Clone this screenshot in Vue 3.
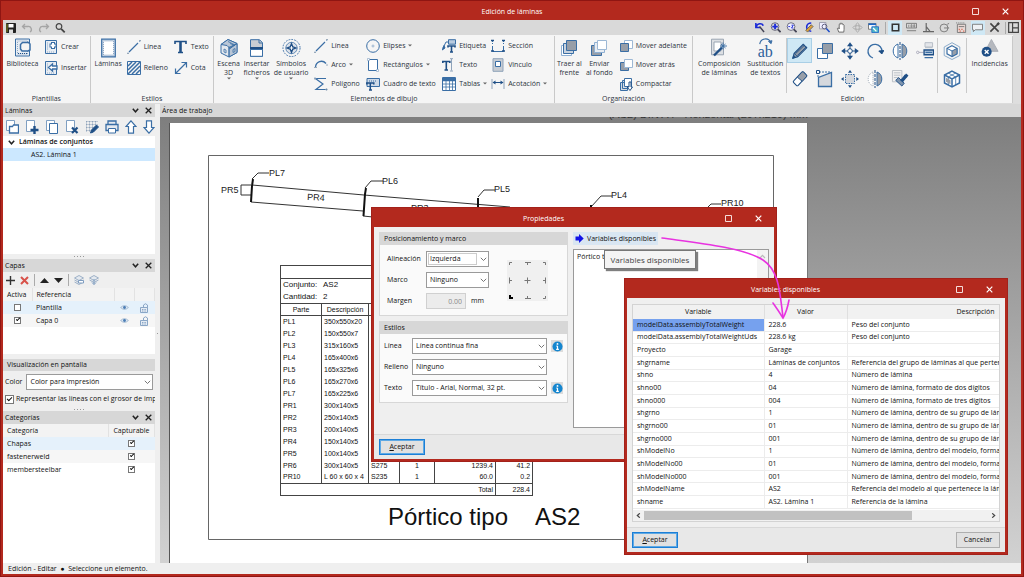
<script setup>
import { h, ref } from 'vue'

const B = '#3a6ea5'
const D = '#1f4f86'
const K = '#979ea8'

// each entry: [viewBox width, viewBox height, markup]
const icons = {
  save: [10, 10, `<path d="M.5.5h9v9h-9z" fill="#222" stroke="#222"/><path d="M2.500 1h5v3.500h-5z" fill="#fff" stroke="none"/><path d="M3 6.500h4V10H3z" fill="#ddd" stroke="none"/><path d="M1 1v8" stroke="#8b8b20"/>`],
  undo: [12, 10, `<path d="M4 1 1.500 3.500 4 6M2 3.500h5a3 3 0 0 1 2 5.500" stroke="#a5a5a5" stroke-width="1.300"/>`],
  redo: [12, 10, `<path d="M8 1l2.500 2.500L8 6M10 3.500H5a3 3 0 0 0-2 5.500" stroke="#a5a5a5" stroke-width="1.300"/>`],
  lens: [11, 10, `<circle cx="4" cy="3.500" r="2.800" stroke="#444" stroke-width="1.200"/><path d="M6.200 5.800l3.500 3.500" stroke="#444" stroke-width="1.800"/>`],
  library: [17, 19, `<path d="M1.500.5h14v17h-14z" fill="#e8edf3"/><path d="M3.500 2.500h10v13h-10z" stroke-dasharray="1 1" stroke="#8fa9c6"/><path d="M8.500 4h6l1.500 1.500v6l-2 1H8l-1.500-2V6z" fill="#f5f5f5" stroke-width="1.500"/><path d="M4 15h9" stroke="${D}" stroke-dasharray="1 1"/>`],
  create: [13, 14, `<path d="M.5.5h11v13H.5z" fill="#e8edf3"/><path d="M2.500 2.500v8M2 12h8" stroke-dasharray="1 1" stroke="#8fa9c6"/><path d="M8 2v7M4.500 5.500h7" stroke="${B}" stroke-width="4"/><path d="M8 3v5M5.500 5.500h5" stroke="#fff" stroke-width="2"/>`],
  insert: [13, 14, `<path d="M.5.5h11v13H.5z" fill="#e8edf3"/><path d="M2.500 2.500v8M2 12h8" stroke-dasharray="1 1" stroke="#8fa9c6"/><path d="M3.500 6.500l4-3.500v2H12v3H7.500v2z" fill="#fff" stroke-width="1.300"/>`],
  sheet: [15, 19, `<path d="M.7.7h13.600v17.600H.7z" fill="#c9d6e5" stroke-width="1.200"/><path d="M2.500 2.500h10v14h-10z" fill="#fff" stroke="#8fa9c6" stroke-dasharray="1 1"/>`],
  line: [14, 14, `<path d="M2 12 11 3M12.500 1.500l.5-.5M1 13l.3-.3" stroke-width="1.200"/><path d="M0 13.500h2M12 .5h2" stroke="#9ab"/>`],
  hatch: [14, 14, `<path d="M.5.500h13v13H.5z"/><path d="M1 5l4-4M1 9l8-8M1 13 13 1M5 13l8-8M9 13l4-4" stroke-width="1.500"/>`],
  bigT: [14, 14, `<path d="M1 4V1.500h11V4M6.500 2v10M4 12.500h5" stroke="${D}" stroke-width="1.600"/><path d="M6.500 2v10" stroke="${D}" stroke-width="2.400"/>`],
  dim: [14, 14, `<path d="M2 12 12 2M7.500 1.500h5v5M1.500 7.500v5h5" stroke-width="1.200"/>`],
  house: [18, 19, `<path d="M1 6l7-5 9 4v9l-8 4.500-8-4z" fill="#e3e8ee"/><path d="M1 6l7-5 9 4-7 5-3-3zM9 9l8-4v9l-8 4.500z" fill="#b9c6d6"/><path d="M9 10l8-5M10 5l5 2M8 3l6 3M4 10.500v3l2 1v-3zM9 8v10M13 11v3l2-1v-3z" stroke-width=".8"/>`],
  file: [15, 18, `<path d="M1.500.7h9l3 3v13.600h-12z" fill="#c9cdd3"/><path d="M1 9h13" stroke="${D}" stroke-width="2"/><path d="M1.500 10.500h12v6.800h-12z" fill="#fff"/><path d="M10 1v3h3"/>`],
  compass: [20, 20, `<circle cx="10" cy="10" r="9" stroke-dasharray="1.800 1.200"/><circle cx="10" cy="10" r="6" fill="#dbe1e9" stroke-width=".8"/><path d="M10 3.500 11.800 8.200 16.500 10 11.800 11.800 10 16.500 8.200 11.800 3.500 10 8.200 8.200z" fill="${D}" stroke="none"/><path d="M10 8v4M8 10h4" stroke="#fff"/>`],
  arc: [14, 14, `<path d="M1.500 9C2 4 8 1 12 5.500" stroke-width="1.300"/><path d="M0 9.500h3M12 7h2" stroke="#9ab"/>`],
  poly: [14, 14, `<path d="M12 1.500H1.500L9 7l-7 5.500h11" stroke-width="1.200"/><circle cx="1" cy="1.500" r=".8" stroke="#9ab"/><circle cx="12.500" cy="12.500" r=".8" stroke="#9ab"/>`],
  ellipse: [14, 14, `<circle cx="7" cy="7" r="6.300"/><circle cx="7" cy="7" r="1" stroke="#9bb4d0"/>`],
  rect: [14, 14, `<path d="M2.500 1.500h9v11h-9z" fill="#fff"/><path d="M1.500.5h2v2h-2zM10.500 11.500h2v2h-2z" fill="#fff" stroke="#8fa9c6" stroke-width=".7"/>`],
  textbox: [14, 14, `<path d="M1 1.500h12.500v8H1z" fill="#cfdae7"/><path d="M3 4h8" stroke-dasharray="1 1"/><path d="M.8 7.500V6h7v1.500M4.300 6v6.500M3 13h3" stroke="${D}" stroke-width="1.500"/>`],
  tag: [14, 14, `<path d="M6.500.7h7v4.500h-7z" fill="#b9cbdf"/><path d="M1 9 4 3h2.500" /><path d="M.2 11 2 6.500 3 9z" fill="${D}"/><path d="M6 8.500V7h7v1.500M9.500 7v5.500M8 13h3" stroke="${D}" stroke-width="1.600"/>`],
  textI: [14, 14, `<path d="M.8 5V3.500h7V5M4.300 4v7.500M2.500 12h3.500" stroke="${D}" stroke-width="1.600"/><path d="M9.500 1v11.500M8 .7h3M8 13h3" stroke="#8fa3ba"/>`],
  table: [14, 14, `<path d="M.5.500h13v13H.5z" fill="#fff"/><path d="M1 2.500h12" stroke-width="3.500" /><path d="M4 1v12M7.500 1v12M10.500 1v12M1 7h12M1 10h12" stroke-width=".8"/>`],
  section: [14, 14, `<path d="M1.500 1v4M12.500 1v4" stroke-dasharray="2 1"/><path d="M1.500 7v5.500h11V7" /><path d="M0 1.500h3M11 1.500h3M0 12h3M11 12h3" stroke="${D}" stroke-width="1.600"/>`],
  link: [14, 14, `<path d="M2 .7h10v12.600H2z" fill="#c7ccd3" stroke="#8fa3ba"/><path d="M4.500 3.500h5v5h-5z" fill="#fff" stroke="${B}"/>`],
  measure: [14, 14, `<path d="M1 2v10M13 2v10" stroke="#8fa3ba"/><path d="M2 5.500h10" stroke="${D}"/><path d="M1.500 5.500l3-2v4zM12.500 5.500l-3-2v4z" fill="${D}" stroke="none"/>`],
  front: [18, 18, `<path d="M1.500 6.500h10v10h-10z" fill="#fff" stroke="#8fb0d3"/><path d="M3.500 4.500h10v10h-10z" fill="#c9d3de"/><path d="M6.500 1.500h10v10h-10z" fill="${K}"/>`],
  back: [18, 18, `<path d="M1.500 6.500h10v10h-10z" fill="${K}"/><path d="M4.500 3.500h10v10h-10z" fill="#e8edf3" stroke="#8fb0d3"/><path d="M7.500 1.500h9v9h-9z" fill="#fff" stroke="#9db8d5"/>`],
  fwd: [14, 14, `<path d="M5.500 1.500h8v8h-8z" fill="#fff" stroke="#9db8d5"/><path d="M1.500 4.500h8v8h-8z" fill="${K}"/>`],
  bwd: [14, 14, `<path d="M1.500 4.500h8v8h-8z" fill="${K}"/><path d="M5.500 1.500h8v8h-8z" fill="#fff" stroke="#9db8d5"/>`],
  compact: [14, 14, `<path d="M1.500 5.500h7v8h-7zM3.500 3.500h7v8h-7z" fill="#d3dae3"/><path d="M5.500 1.500h7v8h-7z" fill="#fff"/><path d="M10 5v5H8l3 3.500 2.500-3.500H12V5z" fill="#fff" stroke="${D}"/>`],
  wand: [18, 19, `<path d="M1.500.7h12v15.600h-12z" fill="#dcdfe3" stroke="#9aa5b2"/><path d="M4 3.500h7v9H4z" fill="#fff" stroke="#9aa5b2"/><path d="M4 17 12 9" stroke="${D}" stroke-width="2.400"/><path d="M13 4v7M10 7.500h7M11 5.500l4.500 4M15.500 5.500l-4.500 4" stroke-width=".9"/>`],
  pencil: [20, 20, `<path d="M2 18l1.500-5.500L13.500 2.500l4 4-10 10z" fill="${K}" stroke="${D}" stroke-width="1.200"/><path d="M5 13 15 3.500M7 15 17 5.500M3.500 12.500l4 4" stroke="${D}"/><path d="M2 18l1-3 2 2z" fill="${D}" stroke="${D}"/>`],
  copy2: [18, 18, `<path d="M1.500 6.500h10v10h-10z" fill="#fff"/><path d="M6.500 1.500h10v10h-10z" fill="${K}"/>`],
  move: [18, 18, `<path d="M9 2v14M2 9h14" stroke="${D}"/><path d="M9 .2l3 4H6zM9 17.800l3-4H6zM.2 9l4-3v6zM17.800 9l-4-3v6z" fill="${D}" stroke="none"/><circle cx="9" cy="9" r="2.300" fill="#fff" stroke="${D}"/>`],
  rotate: [18, 18, `<path d="M7 16A7 7 0 1 1 16 9.500" stroke="${B}" stroke-width="1.300"/><path d="M12.800 9l3 3 2-3.500z" fill="${D}" stroke="${D}"/>`],
  mirror: [18, 18, `<path d="M7 2A7.500 7.500 0 0 0 7 16z" fill="#fff"/><path d="M11 2a7.500 7.500 0 0 1 0 14z" fill="${K}"/><path d="M9 0v18" stroke="${D}" stroke-dasharray="3 1"/>`],
  mirror2: [18, 18, `<path d="M7 2A7.500 7.500 0 0 0 7 16z" fill="#fff" stroke="#9aa5b2" stroke-dasharray="1 1"/><path d="M11 2a7.500 7.500 0 0 1 0 14z" fill="${K}"/><path d="M9 0v18" stroke="${D}" stroke-dasharray="3 1"/>`],
  tags2: [19, 18, `<path d="M9.500.7h8v4.600h-8zM9.500 6h8" stroke="#b5bcc5" fill="#e4e6ea"/><circle cx="1.800" cy="11" r="1.300" stroke="#aab"/><path d="M3 11h5" stroke="#aab"/><path d="M8.500 8.500h10v5h-10z" fill="#b9cbdf" stroke="${D}" stroke-width="1.400"/><path d="M9 16.500h9M10 11h7" stroke-width="1.200"/>`],
  eraser: [20, 20, `<path d="M3 12 12 2.500q1-1 2 0l3 3q1 1 0 2L8 17q-1 1-2 0l-3-3q-1-1 0-2z" fill="#fff" stroke="${D}" stroke-width="1.200"/><path d="M7 8l5-5.500q1-1 2 0l3 3q1 1 0 2L12.500 12.500z" fill="${K}" stroke="${D}"/>`],
  scale: [18, 18, `<path d="M2.500 16.500v-9l13-5v14z" fill="#d5d8dd" stroke-width="1.300"/><path d="M2 7V2h13" stroke-dasharray="2 1"/><path d="M.5.5h3v3h-3z" fill="#fff" stroke="${D}"/>`],
  bounds: [18, 18, `<path d="M4.500 4.500h9v9h-9z" fill="#d5d8dd" stroke-dasharray="1.500 1"/><path d="M9 0l2 2.700H7zM9 18l2-2.700H7zM0 9l2.700-2v4zM18 9l-2.700-2v4z" fill="${D}" stroke="none"/>`],
  stamp: [19, 18, `<path d="M1.500.5h10v12h-10z" fill="#f2f2f2" stroke="#b9bec5"/><path d="M3 3h7M3 5.500h7M3 8h5" stroke="#b9bec5"/><path d="M5 11l6.500 6 2.500-3-6-6z" fill="#7d93ad" stroke="${D}"/><path d="M11 12l5-6" stroke="${D}" stroke-width="3.500"/><path d="M15 5l2.500 2" stroke="${D}" stroke-width="3"/>`],
  cube1: [18, 18, `<path d="M9 .7 16.800 5v8.500L9 17.500 1.200 13.500V5z" stroke="#8cabca"/><path d="M9 3.700 14 6.300v5.500L9 14.500 4 11.800V6.300z" fill="#fff" stroke-width="1.200"/><path d="M9 9v5.500l5-2.700V6.300z" fill="${K}"/><path d="M4 6.300 9 9"/>`],
  cube2: [18, 18, `<path d="M9 1.200 16.500 5v8L9 17 1.500 13V5z" fill="#fff" stroke-width="1.500"/><path d="M1.500 5 9 9l7.500-4M9 9v8" stroke-width="1.500"/><path d="M5.300 3 12.700 7v8M12.700 3 5.300 7v8" stroke-width=".8"/><path d="M3 7.800l4.500 2.400v4L3 11.800z" fill="${K}" stroke="none"/>`],
  warn: [20, 20, `<path d="M12 1 19 13.500H5.500z" fill="#b5b8be" stroke="#a9adb4"/><circle cx="7" cy="14" r="5.300" fill="${D}" stroke="none"/><path d="M5 12l4 4M9 12l-4 4" stroke="#fff" stroke-width="1.500"/>`],
  repl: [20, 8, `<path d="M4 7C5 0 14-1 16.500 5" stroke-width="1.300"/><path d="M14 4l3 2.500L18 3z" fill="${B}"/>`],

  zprev: [12, 12, `<path d="M2 1v5h5M2.500 5.500C3 1 9 1 10 4" stroke="#1b2bd8" stroke-width="1.700"/><path d="M6 5l5 6" stroke="#445" stroke-width="1.600"/>`],
  zfit: [12, 12, `<circle cx="5.500" cy="5" r="4.200" stroke="#667"/><path d="M5.500 2v6M2.500 5h6" stroke="#1b2bd8" stroke-width="2"/><path d="M8.500 8l3 3" stroke="#445" stroke-width="1.800"/>`],
  zdouble: [12, 12, `<circle cx="5.500" cy="5" r="4.200" stroke="#667" fill="#eef"/><path d="M2.500 5h2M6 3.500h2L6 6.500h2" stroke="#1b2bd8"/><path d="M8.500 8l3 3" stroke="#445" stroke-width="1.800"/>`],
  zdraw: [12, 12, `<path d="M9 1a5 4.500 0 1 0 0 9" stroke="#1b2bd8" stroke-width="1.700"/><path d="M3 9l6-6 2 2-6 6z" fill="#e0a03c" stroke="#665"/>`],
  zwin: [12, 12, `<path d="M.5.5h7v7h-7z" stroke="#99a" fill="#eef"/><circle cx="6" cy="5" r="2.600" stroke="#557"/><path d="M8 7l3.500 4" stroke="#1b4bc8" stroke-width="1.600"/>`],
  hand: [12, 12, `<path d="M3 11 1.500 7l1.500-.5.500 1V2.500q1-1 1.300 0V1.500q1-1 1.300 0v.7q1-1 1.400 0v1q1-.8 1.300.3V8L8.500 11z" fill="#fff" stroke="#666"/>`],
  orbit: [12, 12, `<ellipse cx="6" cy="6" rx="5" ry="2" stroke="#aaa"/><ellipse cx="6" cy="6" rx="2" ry="5" stroke="#aaa"/>`],
  wins: [13, 12, `<path d="M.5.5h9v7h-9z" fill="#fff" stroke="#666"/><path d="M.5 1.500h9" stroke="#1b66c8" stroke-width="2"/><path d="M4.500 4.500h8v7h-8z" fill="#4fb6c8" stroke="#1b66c8"/><path d="M6 6l4 4" stroke="#fff" stroke-width="1.500"/>`],
  square: [12, 12, `<path d="M2.500 2.500h7v7h-7z" stroke="#333" stroke-width="1.700"/>`],
  ruler: [12, 12, `<path d="M.5 1.500h11v5H.5zM1 9.500h10" stroke="#777"/><path d="M3 3v2.500M5.500 3h1v2.500h-1zM8.500 3h1v2.500h-1z" stroke="#777" stroke-width=".8"/>`],
  angle: [12, 12, `<path d="M3.500 1v9.500H12M0 10.500h4M3.500 5l4 5" stroke="#666" stroke-width="1.300"/>`],
  circ: [12, 12, `<circle cx="5.500" cy="6.500" r="4.300" stroke="#777"/><path d="M5.500 6.500H11M9 2.500l2-1" stroke="#777"/>`],
  calc: [12, 12, `<path d="M1.500 2.500h9v9h-9z" fill="#e9d8d4" stroke="#777"/><path d="M3 5h6" stroke="#777"/><path d="M3 8h1M6 8h1M8 10h1M4 10h1" stroke="#d0472c" stroke-width="1.300"/><path d="M0 1h10" stroke="#777" stroke-dasharray="1 1"/>`],
  bubble: [12, 12, `<path d="M.5 2.500h11v6h-8l-2 2v-2h-1z" fill="#eef1f4" stroke="#777"/>`],
  tools: [12, 12, `<path d="M1.500 1.500l9 9M10.500 1.500l-9 9" stroke="#444" stroke-width="1.700"/><path d="M9 3l2-2" stroke="#444" stroke-width="2.600"/>`],
  layout: [12, 12, `<path d="M.7.700h10.600v10.600H.7zM5 1v10M5 6.500h6" stroke="#444" stroke-width="1.300"/>`],

  l1: [14, 14, `<path d="M1.500.5h8v10h-8z" fill="#fff" stroke="#7f9fc2"/><path d="M4.500 6.500h3l1-1.500h5v8h-9z" fill="#fff" stroke-width="1.300"/>`],
  l2: [14, 14, `<path d="M1.500.5h8v11h-8z" fill="#fff" stroke="#7f9fc2"/><path d="M9.500 6v8M5.500 10h8" stroke="${D}" stroke-width="2.400"/>`],
  l3: [14, 14, `<path d="M1.500.5h8v10h-8z" fill="#fff" stroke="#7f9fc2"/><path d="M4.500 3.500h8v10h-8z" fill="#fff"/>`],
  l4: [14, 14, `<path d="M1.500.5h8v11h-8z" fill="#fff" stroke="#7f9fc2"/><path d="M7 7.500l5.500 5.500M12.500 7.500 7 13" stroke="${D}" stroke-width="2.200"/>`],
  l5: [14, 14, `<path d="M1.500 1v11M4.500 1v11M7.500 1v8M10.500 1v4M1 1.500h12M1 4.500h12M1 7.500h8M1 10.500h5" stroke="#8fa3ba" stroke-dasharray="1 .5"/><path d="M5.500 13l1-3 5-5 2 2-5 5z" fill="${D}" stroke="${D}"/>`],
  l6: [14, 14, `<path d="M3 4.500V1h8v3.500M1 4.500h12v6H1z" fill="#e4e9ef" stroke-width="1.300"/><path d="M3.500 8.500h7V13h-7z" fill="#fff"/>`],
  up: [12, 14, `<path d="M6 .8 11 6.500H8.500v6.700h-5V6.500H1z" fill="#fff" stroke-width="1.200"/>`],
  down: [12, 14, `<path d="M6 13.200 11 7.500H8.500V.8h-5v6.700H1z" fill="#fff" stroke-width="1.200"/>`],
  chev: [7, 5, `<path d="M.8.8 3.500 3.800 6.200.8" stroke="#222" stroke-width="1.500"/>`],
  chevThin: [7, 5, `<path d="M.8.8 3.500 3.500 6.200.8" stroke="#666" stroke-width=".9"/>`],
  x: [7, 7, `<path d="M.7.7l5.600 5.600M6.300.7.7 6.300" stroke="#222" stroke-width="1.300"/>`],
  xw: [7, 7, `<path d="M.7.7l5.600 5.600M6.300.7.7 6.300" stroke="#fff" stroke-width="1.200"/>`],
  maxw: [7, 7, `<path d="M.5.5h6v6h-6z" stroke="#f5dcda"/>`],
  plus: [9, 9, `<path d="M4.500 0v9M0 4.500h9" stroke="#333" stroke-width="1.400"/>`],
  xr: [9, 9, `<path d="M1 1l7 7M8 1 1 8" stroke="#d8524a" stroke-width="2"/>`],
  triUp: [9, 5, `<path d="M0 5 4.500 0 9 5z" fill="#222" stroke="none"/>`],
  triDn: [9, 5, `<path d="M0 0l4.500 5L9 0z" fill="#222" stroke="none"/>`],
  layerA: [10, 10, `<path d="M.5 3 5 .5l4.500 2.500L5 5.500zM.5 5 5 7.500 9.500 5M.5 7 5 9.500 9.500 7" stroke="#9db0c6" fill="#e4e9ef"/><path d="M4.500 5.500h5v2.500h-5z" fill="#fff" stroke="#7f9dc0"/>`],
  layerB: [10, 10, `<path d="M.5 3 5 .5l4.500 2.500L5 5.500zM.5 5 5 7.500 9.500 5" stroke="#9db0c6" fill="#e4e9ef"/><path d="M5 4v5.500M3 7.500l2 2 2-2" stroke="#7f9dc0"/>`],
  eye: [10, 6, `<path d="M.3 3Q5-1.500 9.700 3 5 7.500.3 3z" fill="#dfe8f2" stroke="#8aa6c6" stroke-width=".8"/><circle cx="5" cy="3" r="1.700" fill="#4b7db5" stroke="none"/>`],
  lock: [9, 10, `<path d="M3.500 4.500V2q2-2.500 4 0v3" stroke="#8aa6c6"/><path d="M.5 4.500h7v5h-7z" fill="#e4ebf3" stroke="#8aa6c6"/><path d="M2 6.500h4M2 8h4" stroke="#8aa6c6" stroke-dasharray="1 .6"/>`],
  info: [12, 12, `<circle cx="6" cy="6" r="5.500" fill="#1586cf" stroke="none"/><path d="M6 5.500v3.500M4.800 5.500H6M4.500 9.200h3" stroke="#fff" stroke-width="1.300"/><circle cx="6" cy="3.200" r="1" fill="#fff" stroke="none"/>`],
  arrowR: [9, 9, `<path d="M.5 2.500H4V0l4.700 4.500L4 9V6.500H.5z" fill="#1212e6" stroke="none"/>`],
  caret: [4, 3, `<path d="M0 .5h4L2 2.500z" fill="#666" stroke="none"/>`],
  left: [5, 5, `<path d="M3.800.3 1.300 2.500l2.500 2.200" stroke="#444" stroke-width="1.200"/>`],
  right: [5, 5, `<path d="M1.200.3 3.700 2.500 1.200 4.700" stroke="#444" stroke-width="1.200"/>`],
  upThin: [7, 5, `<path d="M1 4l2.500-2.700L6 4" stroke="#bbb" stroke-width="1.200"/>`],
}

const Icon = (p) => {
  const [w, ht, body] = icons[p.n]
  return h('svg', { class: 'ic', viewBox: `0 0 ${w} ${ht}`, width: p.w || w, height: p.w ? Math.round((p.w * ht) / w) : ht, 'aria-hidden': 'true', innerHTML: body })
}
Icon.props = ['n', 'w']

const viewTools = ['zprev', 'zfit', 'zdouble', 'zdraw', 'zwin', 'hand', 'orbit', 'wins']
const snapTools = ['square', 'ruler', 'angle', 'circ', 'calc', 'bubble', 'tools']
const sheetTools = ['l1', 'l2', 'l3', 'l4', 'l5', 'l6', 'up', 'down']

const drawing = [
  [['line', 'Línea'], ['arc', 'Arco', 1], ['poly', 'Polígono']],
  [['ellipse', 'Elipses', 1], ['rect', 'Rectángulos', 1], ['textbox', 'Cuadro de texto']],
  [['tag', 'Etiqueta'], ['textI', 'Texto'], ['table', 'Tablas', 1]],
  [['section', 'Sección'], ['link', 'Vínculo'], ['measure', 'Acotación', 1]],
]
const order = [['fwd', 'Mover adelante'], ['bwd', 'Mover atrás'], ['compact', 'Compactar']]
const editTools = ['pencil', 'copy2', 'move', 'rotate', 'mirror', 'tags2', 'eraser', 'scale', 'bounds', 'mirror2', 'stamp']

const layers = ref([
  { name: 'Plantilla', on: false },
  { name: 'Capa 0', on: true },
])
const categories = ref([
  { name: 'Chapas', on: true },
  { name: 'fastenerweld', on: true },
  { name: 'membersteelbar', on: true },
])
const widths = ref(true)
const note = ref('Pórtico tipo   %modelData.elements')

const parts = [
  ['PL1', '350x550x20', 'S275', '1', '550.0', '30.2'],
  ['PL2', '150x550x7', 'S275', '1', '550.0', '4.5'],
  ['PL3', '315x160x5', 'S275', '1', '315.0', '2.0'],
  ['PL4', '165x400x6', 'S275', '1', '400.0', '3.1'],
  ['PL5', '165x325x6', 'S275', '1', '325.0', '2.5'],
  ['PL6', '165x270x6', 'S275', '1', '270.0', '2.1'],
  ['PL7', '165x225x6', 'S275', '1', '225.0', '1.7'],
  ['PR1', '300x140x5', 'S275', '1', '1239.4', '41.2'],
  ['PR2', '250x140x5', 'S275', '1', '1239.4', '38.0'],
  ['PR3', '200x140x5', 'S275', '1', '1239.4', '32.5'],
  ['PR4', '150x140x5', 'S275', '1', '1239.4', '29.2'],
  ['PR5', '100x140x5', 'S275', '1', '60.0', '0.2'],
  ['PR6', '300x140x5', 'S275', '1', '1239.4', '41.2'],
  ['PR10', 'L 60 x 60 x 4', 'S235', '1', '60.0', '0.2'],
]

const variables = [
  ['modelData.assemblyTotalWeight', '228.6', 'Peso del conjunto'],
  ['modelData.assemblyTotalWeightUds', '228.6 kg', 'Peso del conjunto'],
  ['Proyecto', 'Garage', ''],
  ['shgrname', 'Láminas de conjuntos', 'Referencia del grupo de láminas al que pertenece la lámina'],
  ['shno', '4', 'Número de lámina'],
  ['shno00', '04', 'Número de lámina, formato de dos dígitos'],
  ['shno000', '004', 'Número de lámina, formato de tres dígitos'],
  ['shgrno', '1', 'Número de lámina, dentro de su grupo de láminas'],
  ['shgrno00', '01', 'Número de lámina, dentro de su grupo de láminas, dos dígitos'],
  ['shgrno000', '001', 'Número de lámina, dentro de su grupo de láminas, tres dígitos'],
  ['shModelNo', '1', 'Número de lámina, dentro del modelo, formato simple'],
  ['shModelNo00', '01', 'Número de lámina, dentro del modelo, formato de dos dígitos'],
  ['shModelNo000', '001', 'Número de lámina, dentro del modelo, formato de tres dígitos'],
  ['shModelName', 'AS2', 'Referencia del modelo al que pertenece la lámina'],
  ['shname', 'AS2. Lámina 1', 'Referencia de la lámina'],
]
</script>

<template>
  <div class="window">
    <header class="title">
      <span>Edición de láminas</span>
      <div class="winbtns"><button aria-label="Maximizar"><Icon n="maxw" /></button><button aria-label="Cerrar"><Icon n="xw" /></button></div>
    </header>

    <div class="quick">
      <button aria-label="Guardar"><Icon n="save" /></button>
      <button aria-label="Deshacer"><Icon n="undo" /></button>
      <button aria-label="Rehacer"><Icon n="redo" /></button>
      <button aria-label="Buscar"><Icon n="lens" /></button>
      <div class="tools view"><button v-for="t in viewTools" :key="t" :aria-label="t"><Icon :n="t" w="11" /></button></div>
      <i class="vsep"></i>
      <div class="tools snap"><button v-for="t in snapTools" :key="t" :aria-label="t" :class="{ on: t === 'square' || t === 'bubble' }"><Icon :n="t" w="11" /></button></div>
      <i class="vsep"></i>
      <button aria-label="Disposición"><Icon n="layout" w="11" /></button>
    </div>

    <nav class="ribbon">
      <section class="group g1">
        <div class="tools-row">
          <button class="big w36"><Icon n="library" /><span>Biblioteca</span></button>
          <div class="stack two"><button class="small"><Icon n="create" />Crear</button><button class="small"><Icon n="insert" />Insertar</button></div>
        </div>
        <h2>Plantillas</h2>
      </section>
      <section class="group g2">
        <div class="tools-row">
          <button class="big w32"><Icon n="sheet" /><span>Láminas</span></button>
          <div class="stack two w44"><button class="small"><Icon n="line" />Línea</button><button class="small"><Icon n="hatch" />Relleno</button></div>
          <div class="stack two"><button class="small"><Icon n="bigT" />Texto</button><button class="small"><Icon n="dim" />Cota</button></div>
        </div>
        <h2>Estilos</h2>
      </section>
      <section class="group g3">
        <div class="tools-row">
          <button class="big w26"><Icon n="house" /><span>Escena<br>3D</span><Icon n="caret" /></button>
          <button class="big w28"><Icon n="file" /><span>Insertar<br>ficheros</span><Icon n="caret" /></button>
          <button class="big w40"><Icon n="compass" w="19" /><span>Símbolos<br>de usuario</span><Icon n="caret" /></button>
          <div v-for="(col, i) in drawing" :key="i" class="stack three" :class="'d' + i">
            <button v-for="b in col" :key="b[0]" class="small"><Icon :n="b[0]" />{{ b[1] }}<Icon v-if="b[2]" n="caret" /></button>
          </div>
        </div>
        <h2>Elementos de dibujo</h2>
      </section>
      <section class="group g4">
        <div class="tools-row">
          <button class="big w28"><Icon n="front" /><span>Traer al<br>frente</span></button>
          <button class="big w31"><Icon n="back" /><span>Enviar<br>al fondo</span></button>
          <div class="stack three"><button v-for="b in order" :key="b[0]" class="small"><Icon :n="b[0]" />{{ b[1] }}</button></div>
        </div>
        <h2>Organización</h2>
      </section>
      <section class="group g5">
        <div class="tools-row">
          <button class="big w48"><Icon n="wand" /><span>Composición<br>de láminas</span></button>
          <button class="big w42"><b class="ab"><Icon n="repl" w="18" />ab</b><span>Sustitución<br>de textos</span></button>
          <div class="edit"><button v-for="t in editTools" :key="t" :aria-label="t" :class="{ on: t === 'pencil' }"><Icon :n="t" w="18" /></button></div>
          <div class="cubes"><button aria-label="Cubo"><Icon n="cube1" /></button><button aria-label="Cubos"><Icon n="cube2" /></button></div>
          <button class="big inc"><Icon n="warn" w="19" /><span>Incidencias</span></button>
        </div>
        <h2>Edición</h2>
      </section>
    </nav>

    <div class="body">
      <aside>
        <div class="phead"><span>Láminas</span><button aria-label="Plegar"><Icon n="chev" /></button><button aria-label="Cerrar"><Icon n="x" /></button></div>
        <div class="sheetbar"><button v-for="t in sheetTools" :key="t" :aria-label="t"><Icon :n="t" /></button></div>
        <ul class="tree">
          <li class="root"><Icon n="chev" />Láminas de conjuntos</li>
          <li class="leaf">AS2. Lámina 1</li>
        </ul>
        <div class="grip"></div>
        <div class="phead"><span>Capas</span><button aria-label="Plegar"><Icon n="chev" /></button><button aria-label="Cerrar"><Icon n="x" /></button></div>
        <div class="layerbar">
          <button aria-label="Añadir"><Icon n="plus" /></button><button aria-label="Borrar"><Icon n="xr" /></button><i class="vsep"></i>
          <button aria-label="Subir"><Icon n="triUp" /></button><button aria-label="Bajar"><Icon n="triDn" /></button><i class="vsep"></i>
          <button aria-label="Combinar"><Icon n="layerA" /></button><button aria-label="Mover a capa"><Icon n="layerB" /></button>
        </div>
        <div class="lwrap">
          <table class="list layers">
            <thead><tr><th>Activa</th><th>Referencia</th><th></th><th></th></tr></thead>
            <tbody>
              <tr v-for="l in layers" :key="l.name">
                <td class="c"><input v-model="l.on" type="checkbox" :aria-label="l.name"></td><td>{{ l.name }}</td>
                <td class="c"><Icon n="eye" w="9" /></td><td class="c"><Icon n="lock" /></td>
              </tr>
            </tbody>
          </table>
        </div>
        <div class="phead plain"><span>Visualización en pantalla</span></div>
        <div class="colorrow"><label for="color">Color</label><div class="sel"><select id="color"><option>Color para impresión</option></select><Icon n="chevThin" /></div></div>
        <label class="thick"><input v-model="widths" type="checkbox">Representar las líneas con el grosor de impresión</label>
        <div class="grip g2nd"></div>
        <div class="phead"><span>Categorías</span><button aria-label="Plegar"><Icon n="chev" /></button><button aria-label="Cerrar"><Icon n="x" /></button></div>
        <div class="cwrap">
          <table class="list cats">
            <thead><tr><th>Categoría</th><th>Capturable</th></tr></thead>
            <tbody><tr v-for="c in categories" :key="c.name"><td>{{ c.name }}</td><td class="c"><input v-model="c.on" type="checkbox" :aria-label="c.name"></td></tr></tbody>
          </table>
        </div>
      </aside>
      <div class="vgrip"></div>
      <main>
        <div class="phead"><span>Área de trabajo</span></div>
        <div class="canvas">
          <p class="format">(AS2) DIN A4 - Horizontal (297x210) mm</p>
          <div class="sheet">
            <svg class="plan" width="637" height="439" viewBox="170 123 637 439">
              <g fill="none" stroke="#333" stroke-width="1">
                <path d="M208.500 155.500h565v384h-565z" stroke="#666" />
                <path d="M252 185l112 10 146 12M251 202l112 9M363 216l20 2" />
                <path d="M252 179l6-6h11M365 188l6-7h12M478 197l6-7h11M591 207l10-11h11M708 207l3-3h10" />
                <path d="M251 185h-10v10h10" />
              </g>
              <g fill="none" stroke="#111" stroke-width="2"><path d="M253 179l-1 7-1 16M366 188l-1 6-1.500 22M478 198v10M591 205v3" /></g>
              <g class="marks">
                <text x="269" y="176">PL7</text><text x="382" y="184">PL6</text><text x="494" y="192">PL5</text><text x="611" y="198">PL4</text><text x="721" y="206">PR10</text>
                <text x="221" y="193">PR5</text><text x="307" y="200" transform="rotate(3 307 200)">PR4</text><text x="411" y="211">PR3</text>
              </g>
            </svg>
            <table class="parts">
              <colgroup><col class="k1"><col class="k2"><col class="k3"><col class="k4"><col class="k5"><col class="k6"></colgroup>
              <thead>
                <tr class="t0"><th colspan="6"></th></tr>
                <tr class="t1"><th colspan="6"><p><span>Conjunto:</span>AS2</p><p><span>Cantidad:</span>2</p></th></tr>
                <tr class="t2"><th>Parte</th><th>Descripción</th><th>Material</th><th>Cant.</th><th>Longitud</th><th>Peso</th></tr>
              </thead>
              <tbody><tr v-for="p in parts" :key="p[0]"><td v-for="(v, i) in p" :key="i">{{ v }}</td></tr></tbody>
              <tfoot><tr><td colspan="5">Total</td><td>228.4</td></tr></tfoot>
            </table>
            <p class="caption"><span>Pórtico tipo</span><span>AS2</span></p>
          </div>
        </div>
      </main>
    </div>
    <footer class="status">Edición - Editar&nbsp; ●&nbsp; Seleccione un elemento.</footer>

    <section class="dialog props" role="dialog" aria-label="Propiedades">
      <header class="title"><span>Propiedades</span><div class="winbtns"><button aria-label="Maximizar"><Icon n="maxw" /></button><button aria-label="Cerrar"><Icon n="xw" /></button></div></header>
      <div class="dbody pbody">
        <div class="pleft">
          <fieldset>
            <h3>Posicionamiento y marco</h3>
            <div class="posrow">
              <div class="form f1">
                <label for="al">Alineación</label><div class="sel focus"><select id="al"><option>Izquierda</option></select><Icon n="chevThin" /></div>
                <label for="ma">Marco</label><div class="sel"><select id="ma"><option>Ninguno</option></select><Icon n="chevThin" /></div>
                <label for="mg">Margen</label><div class="mg"><input id="mg" type="text" value="0.00" disabled>mm</div>
              </div>
              <svg class="anchor" width="41" height="41" viewBox="0 0 41 41" fill="none" stroke="#777"><path d="M2.500 5V2.500H5M18 2.500h6M20.500 2.500V5M36 2.500h2.500V5M2.500 17.500v6M2.500 20.500H5M20.500 17.500v6M17.500 20.500h6M38.500 17.500v6M38.500 20.500H36M20.500 36v2.500M18 38.500h6M38.500 36v2.500H36" /><path d="M3 35v3h3" stroke="#000" stroke-width="2" /></svg>
            </div>
          </fieldset>
          <fieldset>
            <h3>Estilos</h3>
            <div class="form f2">
              <label for="li">Línea</label><div class="sel"><select id="li"><option>Línea continua fina</option></select><Icon n="chevThin" /></div><button class="inf" aria-label="Información de línea"><Icon n="info" w="11" /></button>
              <label for="re">Relleno</label><div class="sel"><select id="re"><option>Ninguno</option></select><Icon n="chevThin" /></div><i></i>
              <label for="te">Texto</label><div class="sel"><select id="te"><option>Título - Arial, Normal, 32 pt.</option></select><Icon n="chevThin" /></div><button class="inf" aria-label="Información de texto"><Icon n="info" w="11" /></button>
            </div>
          </fieldset>
        </div>
        <div class="pright">
          <button class="vars"><Icon n="arrowR" />Variables disponibles</button>
          <div class="area"><textarea v-model="note" aria-label="Texto" spellcheck="false"></textarea><div class="vbar"><Icon n="upThin" /></div></div>
        </div>
      </div>
      <div class="dfoot"><button class="btn primary"><span><u>A</u>ceptar</span></button></div>
      <div class="tip" role="tooltip">Variables disponibles</div>
    </section>

    <section class="dialog vardlg" role="dialog" aria-label="Variables disponibles">
      <header class="title"><span>Variables disponibles</span><div class="winbtns"><button aria-label="Maximizar"><Icon n="maxw" /></button><button aria-label="Cerrar"><Icon n="xw" /></button></div></header>
      <div class="dbody">
        <div class="vbox">
          <div class="vclip">
            <table class="vtable">
              <colgroup><col class="v1"><col class="v2"><col class="v3"></colgroup>
              <thead><tr><th>Variable</th><th>Valor</th><th>Descripción</th></tr></thead>
              <tbody><tr v-for="v in variables" :key="v[0]"><td>{{ v[0] }}</td><td>{{ v[1] }}</td><td>{{ v[2] }}</td></tr></tbody>
            </table>
          </div>
          <div class="hbar"><Icon n="left" /><div class="track"><i></i></div><Icon n="right" /></div>
        </div>
      </div>
      <div class="dfoot"><button class="btn primary"><span><u>A</u>ceptar</span></button><button class="btn">Cancelar</button></div>
    </section>

    <svg class="pointer" width="140" height="90" viewBox="656 233 140 90" fill="none" stroke="#e833e0" stroke-width="1.600" stroke-linecap="round" aria-hidden="true">
      <path d="M662 238C690 242 743 247 763 260C780 271 780 296 783 317" /><path d="M773 303Q778 310 783 318Q787 311 789 300" />
    </svg>
  </div>
</template>

<style>
body { margin: 0; }
</style>

<style scoped>
.window { position: relative; box-sizing: border-box; min-height: 100vh; display: flex; flex-direction: column; overflow: hidden; border: 1px solid #8f1512; padding: 0 2px 2px; background: #b3291e; font: 7px/10px "Open Sans", "Noto Sans", sans-serif; color: #111; }
button { font: inherit; color: inherit; background: none; border: 0; padding: 0; margin: 0; display: flex; align-items: center; justify-content: center; }
h2, h3, p, ul { margin: 0; padding: 0; font: inherit; list-style: none; }
.ic { fill: none; stroke: #3a6ea5; flex: none; display: block; }
.title { position: relative; flex: none; height: 19px; display: flex; align-items: center; justify-content: center; color: #fff; }
.title > span { padding-top: 2px; white-space: nowrap; }
.winbtns { position: absolute; right: 12px; top: 7px; display: flex; gap: 23px; }

.quick { flex: none; height: 15px; background: #d9d9d9; display: flex; align-items: center; padding: 0 2px 0 3px; gap: 5px; }
.tools { display: flex; justify-content: space-between; }
.tools button { width: 14px; height: 14px; }
.view { width: 129px; margin-left: auto; }
.snap { width: 113px; }
.quick .vsep { margin: 0 -3px 0 -1px; }
.on { background: #cfe8f5; }
.edit .on { outline: 1px solid #a9cfe6; outline-offset: -1px; }
.vsep { width: 1px; height: 12px; background: #aaa; flex: none; }

.ribbon { flex: none; display: flex; background: #f5f5f5; border-bottom: 1px solid #dcdcdc; padding-top: 1px; border-right: 8px solid #dedede; color: #2c3440; }
.group { border-right: 1px solid #c9c9c9; box-sizing: border-box; min-width: 0; }
.g1 { flex: 87 1 0; } .g2 { flex: 123 1 0; } .g3 { flex: 341 1 0; } .g4 { flex: 138 1 0; } .g5 { flex: 320 1 0; }
.tools-row { height: 58px; display: flex; padding-left: 1px; }
.g4 .tools-row { padding-left: 0; }
.group h2 { text-align: center; height: 9px; line-height: 9px; }
.big { flex-direction: column; justify-content: flex-start; line-height: 9px; text-align: center; white-space: nowrap; flex: none; padding-top: 2px; }
.big > .ic:first-child { height: 20px; }
.big span { margin-top: 1px; }
.w26 { width: 27px; } .w28 { width: 29px; } .w31 { width: 31px; } .w32 { width: 33px; } .w36 { width: 37px; } .w40 { width: 40px; } .w42 { width: 42px; } .w44 { width: 47px; } .w48 { width: 50px; }
.stack { display: flex; flex-direction: column; align-items: flex-start; padding-left: 2px; box-sizing: border-box; flex: none; }
.g1 .stack { padding-left: 4px; }
.small { gap: 3px; white-space: nowrap; }
.two .small { height: 21px; } .three .small { height: 19px; }
.d0 { width: 52px; } .d1 { width: 76px; } .d2 { width: 49px; } .d0, .d1, .d2, .d3 { padding-left: 3px; }
.g4 .stack { padding-left: 4px; }
.ab { font: 16px/11px "Liberation Serif", serif; color: #2b5f9a; height: 20px; display: flex; flex-direction: column; align-items: center; }
.ab .ic { margin-bottom: 1px; }
.edit { display: grid; grid-template-columns: repeat(6, 25px); grid-auto-rows: 25px; row-gap: 3px; border: solid #c9c9c9; border-width: 0 1px; height: 55px; margin: 2px 0 0; flex: none; }
.cubes { width: 28px; display: grid; grid-auto-rows: 25px; row-gap: 3px; border-right: 1px solid #c9c9c9; height: 55px; margin-top: 2px; flex: none; }
.inc { flex: 1; }

.body { flex: 1; display: flex; min-height: 0; background: #efefef; }
aside { width: 152px; flex: none; display: flex; flex-direction: column; background: #efefef; }
.phead { flex: none; height: 13px; background: #d7d7d7; display: flex; align-items: center; gap: 6px; padding: 0 3px 0 2px; }
.phead span { flex: 1; }
.plain { padding-left: 4px; height: 12px; margin-top: 5px; }
.sheetbar { height: 19px; flex: none; display: flex; align-items: center; justify-content: space-between; padding: 0 0 0 2px; }
.tree { flex: none; height: 118px; background: #fff; }
.tree li { display: flex; align-items: center; height: 13px; }
.tree .root { font-weight: 600; padding-left: 5px; gap: 4px; height: 12px; }
.leaf { background: #cce8ff; padding-left: 28px; }
.grip { flex: none; height: 5px; width: 12px; margin: 0 auto; background: radial-gradient(circle, #999 0 0.5px, transparent 1px) 0 0 / 3px 5px; }
.grip.g2nd { height: 4px; }
.layerbar { flex: none; height: 16px; display: flex; align-items: center; gap: 5px; padding: 0 3px; }
.list { border-collapse: collapse; width: 100%; table-layout: fixed; background: #fff; }
.list th { font-weight: normal; text-align: left; height: 13px; padding: 0 4px; background: #f3f3f3; border-right: 1px solid #e2e2e2; box-sizing: border-box; }
.list td { height: 13px; padding: 0 4px; box-sizing: border-box; }
.list tbody tr:nth-child(1) { background: #e5f1fb; }
.list tbody tr:nth-child(2) { background: #f6f6f6; }
.list .c { padding: 0; }
.c > * { display: block; margin: 0 auto; }
.layers th:nth-child(1) { width: 29px; } .layers th:nth-child(3), .layers th:nth-child(4) { width: 20px; }
.cats th:nth-child(2) { width: 46px; padding: 0; text-align: center; }
.lwrap { flex: none; height: 66px; background: #fff; }
.cwrap { flex: 1; background: #fff; }
input[type="checkbox"] { appearance: none; box-sizing: border-box; width: 7px; height: 7px; border: 1px solid #777; background: #fff; margin: 0 auto; position: relative; flex: none; }
input[type="checkbox"]:checked::after { content: ""; position: absolute; left: 1px; top: 0; width: 3px; height: 1px; border: solid #111; border-width: 0 0 1px 1px; transform: rotate(-45deg); }
.colorrow { flex: none; display: flex; align-items: center; gap: 4px; padding: 2px 2px 0; height: 18px; }
.sel { position: relative; flex: 1; }
.sel select { appearance: none; display: block; width: 100%; height: 16px; box-sizing: border-box; border: 1px solid #9a9a9a; border-radius: 0; background: #fff; font: inherit; color: inherit; padding: 0 12px 0 3px; }
.sel .ic { position: absolute; right: 2px; top: 6px; pointer-events: none; }
.thick { flex: none; display: flex; align-items: center; gap: 2px; height: 16px; padding-left: 2px; white-space: nowrap; overflow: hidden; }
.thick input[type="checkbox"] { width: 9px; height: 9px; margin: 0; }
.thick input[type="checkbox"]:checked::after { top: 1px; width: 4px; height: 2px; }
.vgrip { width: 5px; flex: none; background: radial-gradient(circle, #999 0 0.5px, transparent 1px) 0 50% / 5px 3px no-repeat; }

main { flex: 1; min-width: 0; display: flex; flex-direction: column; }
.canvas { position: relative; flex: 1; padding: 6px 0 0 9px; background: linear-gradient(#7e7e7e, #d2d2d2); overflow: hidden; display: flex; }
.format { position: absolute; left: 9px; width: 639px; top: -8px; text-align: right; font: 11px/11px "Liberation Sans", Arial, sans-serif; color: #333; }
.sheet { position: relative; width: 639px; min-height: 439px; flex: none; background: #fff; border-left: 1px solid #555; border-right: 1px solid #777; box-sizing: border-box; }
.plan { display: block; }
.marks { font: 9px "Liberation Sans", Arial, sans-serif; fill: #222; }
.parts { position: absolute; left: 110px; top: 142px; width: 252px; border-collapse: collapse; table-layout: fixed; font: 7px/8px "Liberation Sans", Arial, sans-serif; color: #111; border: 1px solid #444; }
.parts th, .parts td { padding: 0 2px; font-weight: normal; white-space: nowrap; text-align: left; height: 12px; box-sizing: border-box; }
.k1 { width: 41px; } .k2 { width: 47px; } .k3 { width: 31px; } .k4 { width: 35px; } .k5 { width: 61px; } .k6 { width: 37px; }
.parts .t0 th { height: 13px; }
.parts .t1 th { height: 25px; border: 1px solid #444; font-size: 8px; line-height: 12px; }
.t1 span { display: inline-block; width: 40px; }
.parts .t2 th { border: 1px solid #444; text-align: center; }
.parts tbody td { border: solid #444; border-width: 0 1px; }
.parts tbody td:nth-child(4) { text-align: center; }
.parts tbody td:nth-child(n+5), .parts tfoot td { text-align: right; }
.parts tfoot td { border: 1px solid #444; }
.caption { position: absolute; left: 218px; top: 380px; display: flex; gap: 27px; font: 24px/28px "Liberation Sans", Arial, sans-serif; color: #111; }
.status { flex: none; height: 11px; background: #efefef; padding-left: 5px; line-height: 11px; }

.dialog { position: absolute; box-sizing: border-box; border: 1px solid #a3211a; padding: 0 2px 2px; background: #b3291e; display: flex; flex-direction: column; }
.props { left: 370px; top: 206px; width: 406px; height: 255px; }
.vardlg { left: 623px; top: 277px; width: 384px; height: 277px; }
.dialog .winbtns { right: 12px; }
.dialog .title { padding-right: 61px; }
.dbody { flex: 1; min-height: 0; background: #efefef; padding: 6px 5px; }
.dfoot { flex: none; height: 25px; box-sizing: border-box; background: #e8e8e8; border-top: 1px solid #d8d8d8; display: flex; justify-content: space-between; align-items: center; padding: 0 5px; }
.btn { height: 16px; width: 44px; box-sizing: border-box; border: 1px solid #aeaeae; background: #e1e1e1; }
.btn.primary { width: 46px; border: 1px solid #1c7fd6; outline: 1px solid #5fa9e4; outline-offset: -2px; }
.pbody { display: flex; gap: 5px; padding-top: 5px; }
.pleft { width: 189px; flex: none; display: flex; flex-direction: column; gap: 5px; }
fieldset { margin: 0; padding: 0; border: 1px solid #d7d7d7; background: #fafafa; min-width: 0; }
h3 { background: #d7d7d7; height: 12px; line-height: 12px; padding-left: 4px; }
.posrow { display: flex; gap: 18px; padding: 6px 7px; }
.form { display: grid; align-items: center; row-gap: 5px; }
.f1 { grid-template-columns: 38px 63px; column-gap: 1px; }
.anchor { background: #f0f0f0; margin-top: 9px; }
.mg { display: flex; align-items: center; gap: 5px; }
.mg input { width: 40px; height: 16px; box-sizing: border-box; border: 1px solid #d0d0d0; background: #ececec; font: inherit; color: #8a8a8a; text-align: right; padding: 0 3px; }
.focus::before { content: ""; position: absolute; left: 2px; top: 2px; width: 47px; height: 10px; border: 1px solid #ccc; pointer-events: none; z-index: 1; }
.f2 { grid-template-columns: 24px 135px 12px; column-gap: 4px; padding: 4px 4px 6px; }
.inf { width: 12px; height: 12px; background: #dcdcdc; }
.pright { flex: 1; display: flex; flex-direction: column; gap: 4px; align-items: flex-start; }
.vars { height: 13px; background: #d9e6f2; padding: 0 2px; gap: 3px; }
.area { align-self: stretch; height: 179px; box-sizing: border-box; border: 1px solid #9a9a9a; background: #fff; display: flex; }
.area textarea { flex: 1; min-width: 0; border: 0; padding: 2px 3px; resize: none; outline: 0; font: inherit; color: inherit; overflow: hidden; white-space: pre; background: none; }
.vbar { width: 11px; background: #f3f3f3; padding: 4px 0 0 2px; box-sizing: border-box; }
.tip { position: absolute; left: 232px; top: 42px; height: 19px; width: 92px; box-sizing: border-box; border: 1px solid #777; background: #f4f4f4; box-shadow: 2px 2px 1px rgba(0, 0, 0, 0.5); font-size: 8px; line-height: 17px; text-align: center; color: #444; white-space: nowrap; }

.vbox { height: 218px; box-sizing: border-box; border: 1px solid #d3d3d3; background: #fff; display: flex; flex-direction: column; }
.vclip { flex: 1; overflow: hidden; }
.vtable { width: 471px; height: 204px; border-collapse: collapse; table-layout: fixed; }
.v1 { width: 131px; } .v2 { width: 83px; } .v3 { width: 257px; }
.vtable th { height: 14px; padding: 0; font-weight: normal; background: #f1f1f1; border-right: 1px solid #dfdfdf; text-align: center; }
.vtable td { padding: 0 4px; line-height: 10px; border: solid #ececec; border-width: 0 1px 1px 0; white-space: nowrap; overflow: hidden; }
.vtable tbody tr:first-child td:first-child { background: #76a1ee; }
.hbar { flex: none; height: 11px; background: #f1f1f1; display: flex; align-items: center; gap: 3px; padding: 0 3px; }
.track { flex: 1; height: 9px; }
.track i { display: block; height: 100%; width: 78%; background: #c1c1c1; }
.pointer { position: absolute; left: 655px; top: 232px; pointer-events: none; }
</style>
